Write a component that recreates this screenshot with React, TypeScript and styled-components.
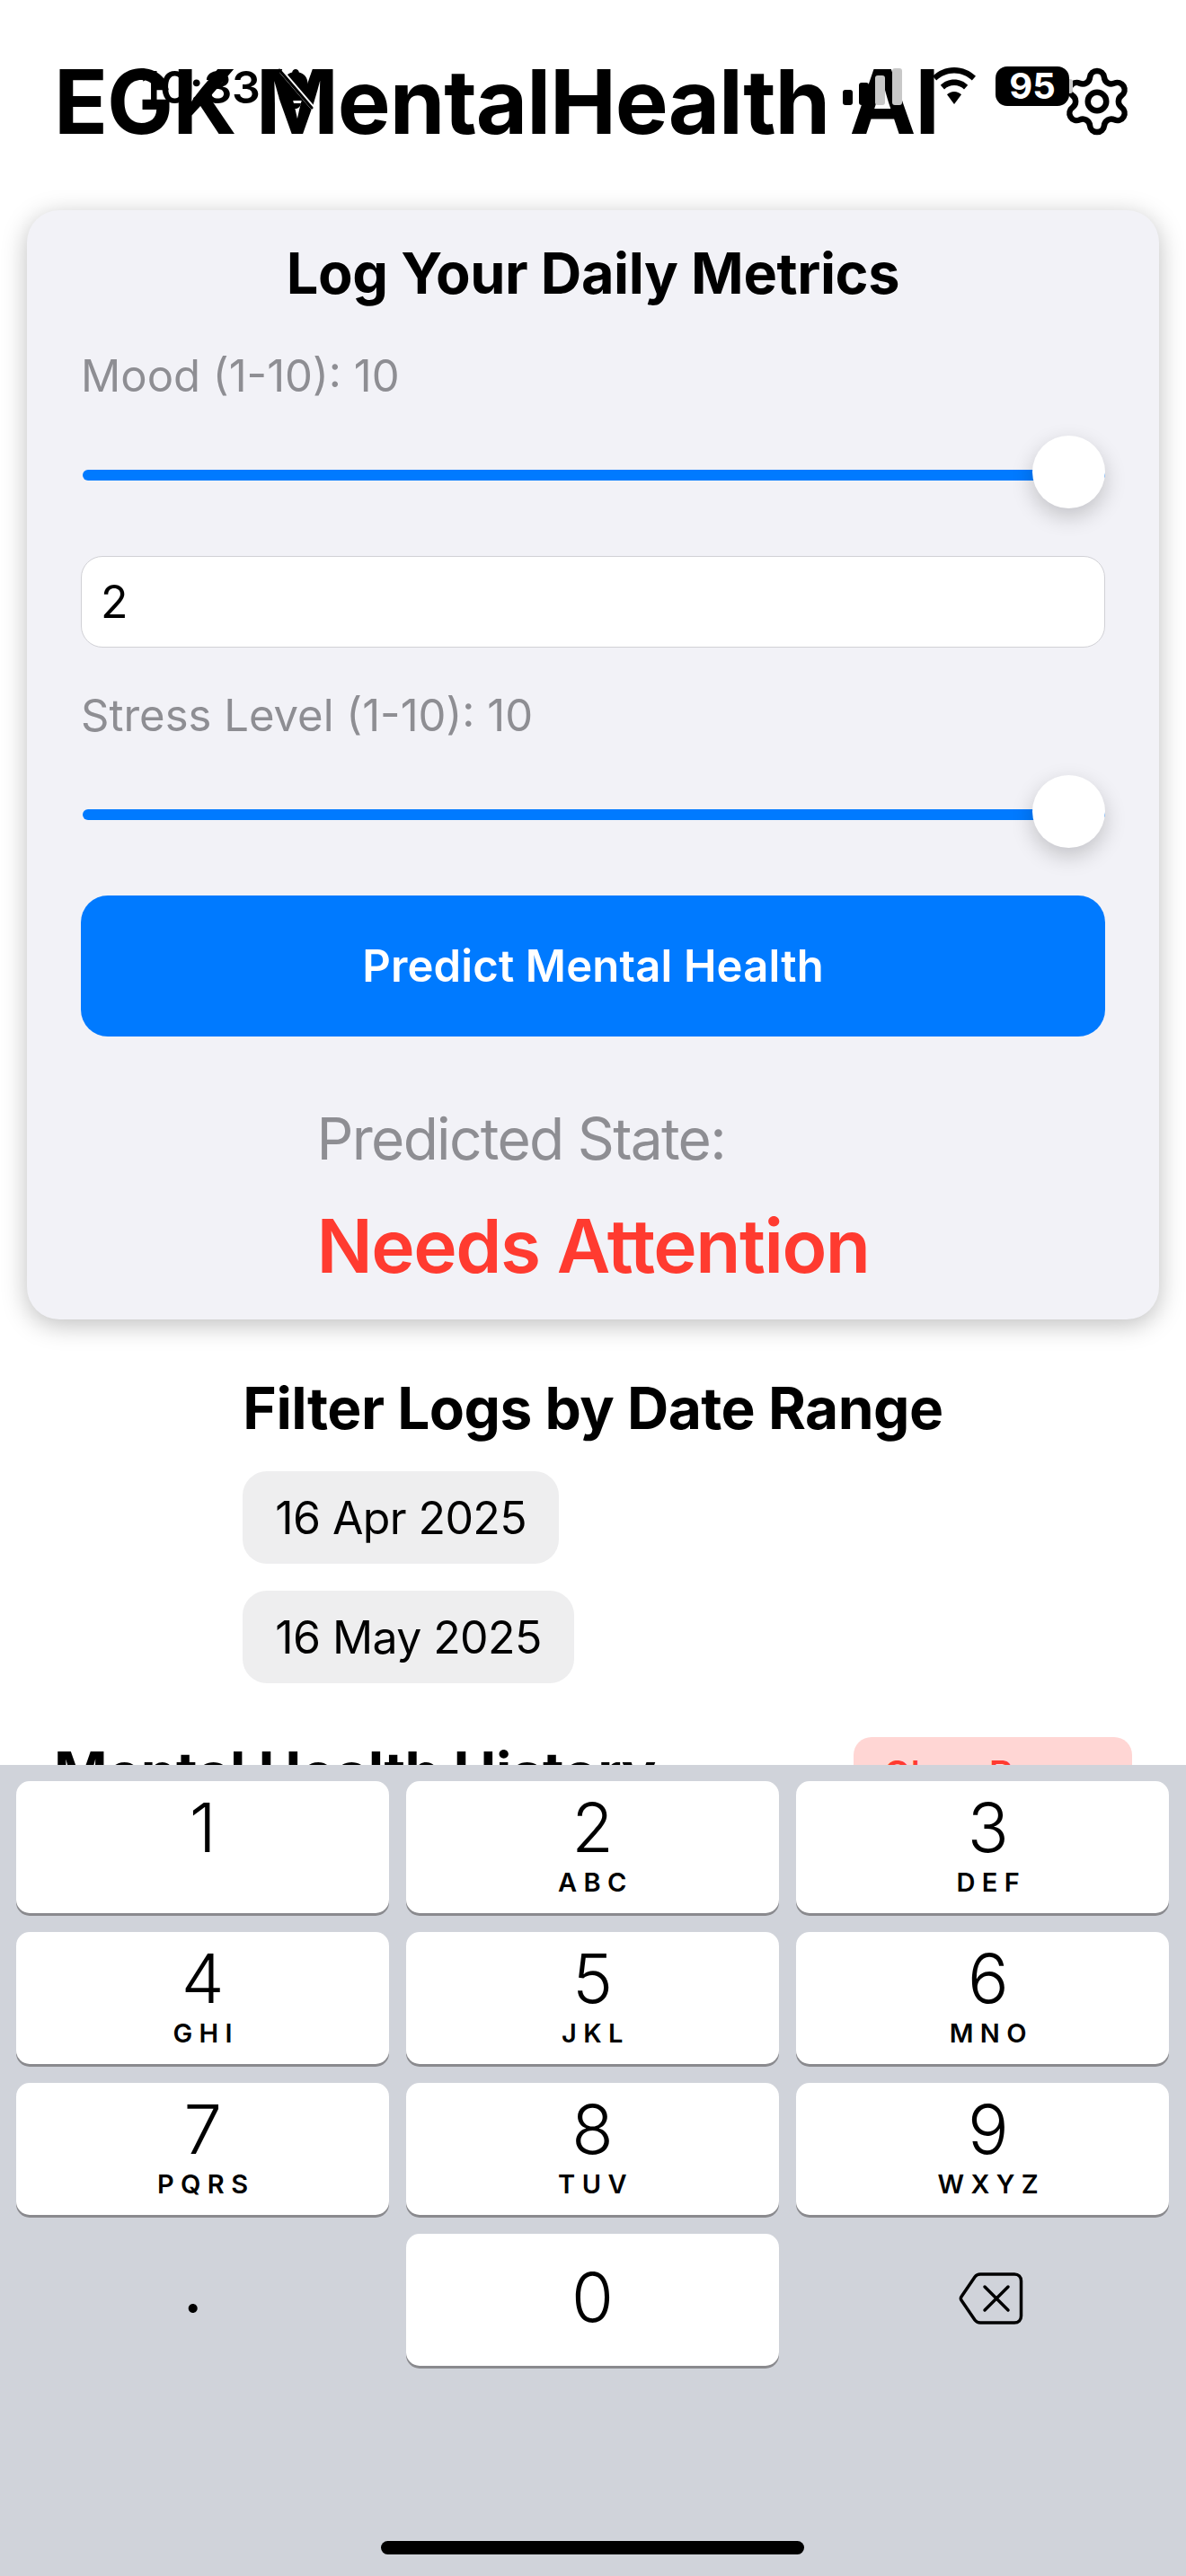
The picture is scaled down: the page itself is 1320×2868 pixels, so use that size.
import React from "react";
import styled, { createGlobalStyle } from "styled-components";
import { Settings } from "lucide-react";

const Global = createGlobalStyle`
  html, body { margin: 0; padding: 0; background: #fff; }
  * { box-sizing: border-box; }
  body { font-family: Inter, "Liberation Sans", sans-serif; }
`;

const Screen = styled.div`
  position: relative;
  width: 1320px;
  height: 2868px;
  overflow: hidden;
  background: #fff;
  color: #000;
`;

const StatusBar = styled.div`
  position: absolute;
  top: 0;
  left: 0;
  width: 100%;
  height: 150px;
  display: flex;
  align-items: flex-start;
  padding: 74px 130px 0 157px;
  z-index: 2;
`;

const Time = styled.span`
  font-size: 50px;
  line-height: 46px;
  font-weight: 600;
  letter-spacing: -0.2px;
`;

const SilentIcon = styled.svg`
  margin-left: 17px;
  margin-top: 2px;
  width: 44px;
  height: 46px;
`;

const StatusRight = styled.div`
  margin-left: auto;
  display: flex;
  align-items: flex-start;
`;

const SignalIcon = styled.svg`
  width: 66px;
  height: 42px;
  margin-top: 1px;
`;

const WifiIcon = styled.svg`
  width: 48px;
  height: 42px;
  margin: 1px 22px 0 34px;
`;

const Battery = styled.div`
  position: relative;
  width: 82px;
  height: 44px;
  border-radius: 13px;
  background: #000;
  color: #fff;
  font-size: 40px;
  line-height: 44px;
  font-weight: 700;
  text-align: center;
  &::after {
    content: "";
    position: absolute;
    right: -4px;
    top: 14px;
    width: 4px;
    height: 16px;
    border-radius: 0 3px 3px 0;
    background: #c8c8c8;
  }
`;

const Header = styled.header`
  display: flex;
  align-items: center;
  justify-content: space-between;
  padding: 53px 58px 0 60px;
`;

const AppTitle = styled.h1`
  margin: 0;
  font-size: 99px;
  line-height: 120px;
  font-weight: 700;
  letter-spacing: -1.1px;
  white-space: nowrap;
`;

const Card = styled.section`
  margin: 61px 30px 0;
  padding: 30px 60px 31px;
  background: #f2f2f7;
  border-radius: 36px;
  box-shadow: 0 6px 28px rgba(0, 0, 0, 0.26);
`;

const CardTitle = styled.h2`
  margin: 0;
  font-size: 63px;
  line-height: 80px;
  font-weight: 700;
  text-align: center;
  letter-spacing: -0.4px;
`;

const FieldLabel = styled.div<{ $top: number }>`
  margin-top: ${(p) => p.$top}px;
  font-size: 49px;
  line-height: 60px;
  color: #8e8e93;
`;

const Slider = styled.div`
  position: relative;
  height: 81px;
  margin-top: 36px;
  padding-top: 38px;
`;

const SliderTrack = styled.div`
  height: 12px;
  margin-left: 2px;
  background: #007aff;
  border-radius: 6px;
`;

const SliderThumb = styled.div`
  position: absolute;
  top: 0;
  right: 0;
  width: 81px;
  height: 81px;
  border-radius: 50%;
  background: #fff;
  box-shadow: 0 9px 24px rgba(0, 0, 0, 0.2);
`;

const NumberInput = styled.div`
  height: 102px;
  margin-top: 53px;
  padding-left: 21px;
  display: flex;
  align-items: center;
  background: #fff;
  border: 1.5px solid #d1d1d6;
  border-radius: 24px;
  font-size: 50px;
`;

const PrimaryButton = styled.button`
  display: block;
  width: 100%;
  height: 157px;
  margin-top: 53px;
  padding: 0;
  border: 0;
  border-radius: 30px;
  background: #007aff;
  color: #fff;
  font-family: inherit;
  font-size: 49px;
  font-weight: 600;
  letter-spacing: 0.15px;
`;

const Result = styled.div`
  width: max-content;
  margin: 74px auto 0;
`;

const ResultLabel = styled.div`
  font-size: 64px;
  line-height: 80px;
  color: #8e8e93;
  letter-spacing: -1.7px;
`;

const ResultValue = styled.div`
  margin-top: 30px;
  font-size: 82px;
  line-height: 100px;
  font-weight: 600;
  color: #ff3b30;
  letter-spacing: -1.5px;
`;

const FilterBlock = styled.section`
  width: max-content;
  margin: 59px auto 0;
  display: flex;
  flex-direction: column;
  align-items: flex-start;
  gap: 30px;
`;

const SectionTitle = styled.h2`
  margin: 0;
  font-size: 64px;
  line-height: 80px;
  font-weight: 700;
  letter-spacing: -0.5px;
  white-space: nowrap;
`;

const DatePill = styled.div`
  height: 103px;
  padding: 0 36px;
  display: flex;
  align-items: center;
  background: #eeeeef;
  border-radius: 27px;
  font-size: 50px;
  letter-spacing: -0.6px;
`;

const HistoryRow = styled.div`
  display: flex;
  justify-content: space-between;
  align-items: flex-start;
  margin-top: 60px;
  padding: 0 60px;
`;

const ClearButton = styled.button`
  width: 310px;
  height: 100px;
  padding: 0 0 18px;
  border: 0;
  border-radius: 20px;
  background: #ffd6d4;
  color: #ff3b30;
  font-family: inherit;
  font-size: 42px;
  font-weight: 500;
`;

const Keyboard = styled.div`
  position: absolute;
  left: 0;
  right: 0;
  bottom: 0;
  height: 903px;
  padding: 18px 19px 0 18px;
  background: #d0d3da;
  display: flex;
  flex-direction: column;
`;

const KeyGrid = styled.div`
  display: grid;
  grid-template-columns: repeat(3, 1fr);
  grid-auto-rows: 147px;
  gap: 21px 18.5px;
`;

const Key = styled.div`
  display: flex;
  flex-direction: column;
  align-items: center;
  background: #fff;
  border-radius: 15px;
  box-shadow: 0 3px 0 #8a8a8e;
  &:nth-child(3n) {
    padding-left: 13px;
  }
`;

const KeyDigit = styled.span<{ $low?: boolean }>`
  font-size: 76px;
  line-height: 92px;
  font-weight: 350;
  margin-top: ${(p) => (p.$low ? 24 : 5)}px;
`;

const KeyLetters = styled.span`
  font-size: 29px;
  line-height: 32px;
  font-weight: 600;
  letter-spacing: 7.4px;
  margin-right: -7px;
`;

const BlankKey = styled.div`
  display: flex;
  align-items: center;
  justify-content: center;
`;

const DotKey = styled(BlankKey)`
  font-size: 76px;
  line-height: 92px;
  padding: 14px 22px 0 0;
  align-items: flex-start;
`;

const BackspaceIcon = styled.svg`
  width: 72px;
  height: 60px;
  margin: 0 0 3px 20px;
`;

const HomeIndicator = styled.div`
  width: 471px;
  height: 15px;
  margin: auto auto 24px;
  border-radius: 8px;
  background: #000;
`;

const keys: [string, string][] = [
  ["1", ""],
  ["2", "ABC"],
  ["3", "DEF"],
  ["4", "GHI"],
  ["5", "JKL"],
  ["6", "MNO"],
  ["7", "PQRS"],
  ["8", "TUV"],
  ["9", "WXYZ"],
];

export default function App() {
  return (
    <Screen>
      <Global />
      <Header>
        <AppTitle>EGK MentalHealth AI</AppTitle>
        <Settings size={82} strokeWidth={1.9} color="#000" />
      </Header>

      <StatusBar>
        <Time>10:33</Time>
        <SilentIcon viewBox="0 0 44 46">
          <path
            fill="#000"
            d="M22 1c2 0 3.500 1.500 3.800 3.500C32 6 35.500 11 35.500 17v9l5 8v2H8L3.500 34l5-8v-9C8.500 11 12 6 18.200 4.500 18.500 2.500 20 1 22 1zM16 39h12c-.5 3.500-3 6-6 6s-5.500-2.500-6-6z"
          />
          <path stroke="#fff" strokeWidth="5" d="M6 3l36 42" />
          <path stroke="#000" strokeWidth="3" strokeLinecap="round" d="M4 2l36 42" />
        </SilentIcon>
        <StatusRight>
          <SignalIcon viewBox="0 0 66 42">
            <rect x="0" y="25" width="11" height="17" rx="3" fill="#000" />
            <rect x="18" y="17" width="11" height="25" rx="3" fill="#000" />
            <rect x="36" y="9" width="11" height="33" rx="3" fill="#c8c8c8" />
            <rect x="55" y="1" width="11" height="41" rx="3" fill="#c8c8c8" />
          </SignalIcon>
          <WifiIcon viewBox="0 0 48 42">
            <path
              fill="#000"
              d="M24 0c9.500 0 17.800 3.800 24 9.800l-4.200 4.700C38.600 9.500 31.700 6.500 24 6.500S9.400 9.500 4.200 14.500L0 9.800C6.200 3.800 14.500 0 24 0z"
            />
            <path
              fill="#000"
              d="M24 13.500c6 0 11.300 2.400 15.200 6.300l-4.200 4.600c-2.800-2.800-6.700-4.500-11-4.500s-8.200 1.700-11 4.500l-4.200-4.600C12.700 15.900 18 13.500 24 13.500z"
            />
            <path fill="#000" d="M24 27c3.200 0 6 1.300 8 3.300L24 41l-8-10.700c2-2 4.800-3.300 8-3.300z" />
          </WifiIcon>
          <Battery>95</Battery>
        </StatusRight>
      </StatusBar>

      <Card>
        <CardTitle>Log Your Daily Metrics</CardTitle>
        <FieldLabel $top={45}>Mood (1-10): 10</FieldLabel>
        <Slider>
          <SliderTrack />
          <SliderThumb />
        </Slider>
        <NumberInput>2</NumberInput>
        <FieldLabel $top={46}>Stress Level (1-10): 10</FieldLabel>
        <Slider>
          <SliderTrack />
          <SliderThumb />
        </Slider>
        <PrimaryButton>Predict Mental Health</PrimaryButton>
        <Result>
          <ResultLabel>Predicted State:</ResultLabel>
          <ResultValue>Needs Attention</ResultValue>
        </Result>
      </Card>

      <FilterBlock>
        <SectionTitle>Filter Logs by Date Range</SectionTitle>
        <DatePill>16 Apr 2025</DatePill>
        <DatePill>16 May 2025</DatePill>
      </FilterBlock>

      <HistoryRow>
        <SectionTitle>Mental Health History</SectionTitle>
        <ClearButton>Clear Range</ClearButton>
      </HistoryRow>

      <Keyboard>
        <KeyGrid>
          {keys.map(([digit, letters]) => (
            <Key key={digit}>
              <KeyDigit>{digit}</KeyDigit>
              {letters && <KeyLetters>{letters}</KeyLetters>}
            </Key>
          ))}
          <DotKey>.</DotKey>
          <Key>
            <KeyDigit $low>0</KeyDigit>
          </Key>
          <BlankKey>
            <BackspaceIcon viewBox="0 0 72 60" fill="none" stroke="#000" strokeWidth="3.500" strokeLinejoin="round" strokeLinecap="round">
              <path d="M24 3h38c4.500 0 7.500 3 7.500 7.500v39c0 4.500-3 7.500-7.500 7.500H24c-2.500 0-4.500-1-6-3L3 32c-1-1.500-1-2.500 0-4L18 6c1.500-2 3.500-3 6-3z" />
              <path d="M29 17l26 26M55 17L29 43" />
            </BackspaceIcon>
          </BlankKey>
        </KeyGrid>
        <HomeIndicator />
      </Keyboard>
    </Screen>
  );
}
